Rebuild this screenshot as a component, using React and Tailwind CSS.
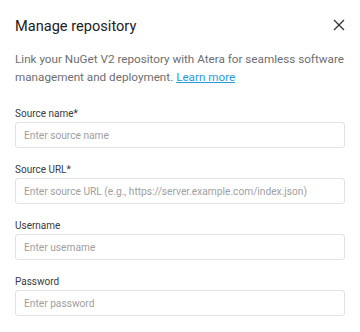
import React from 'react';

const fields = [
  { label: 'Source name*', placeholder: 'Enter source name', type: 'text' },
  { label: 'Source URL*', placeholder: 'Enter source URL (e.g., https://server.example.com/index.json)', type: 'text' },
  { label: 'Username', placeholder: 'Enter username', type: 'text' },
  { label: 'Password', placeholder: 'Enter password', type: 'password' },
];

const App = () => {
  return (
    <div className="w-[360px] h-[332px] bg-white font-[Roboto,sans-serif] px-[15px] pt-4 overflow-hidden">
      {/* Header */}
      <div className="flex items-start justify-between h-5">
        <h2 className="text-[14.6px] leading-5 text-[#212121] font-normal">Manage repository</h2>
        <button className="mt-[3px] text-[#333]">
          <svg width="12" height="12" viewBox="0 0 12 12" fill="none" stroke="currentColor" strokeWidth="1.3">
            <path d="M1 1 L11 11 M11 1 L1 11" />
          </svg>
        </button>
      </div>

      <p className="mt-[14px] text-[11.7px] leading-[18px] text-[#6e6e6e]">
        Link your NuGet V2 repository with Atera for seamless software management and deployment.{' '}
        <a href="#" className="text-[#2b9ad8] underline">Learn more</a>
      </p>

      {/* Form */}
      <div className="mt-5 flex flex-col gap-[14px]">
        {fields.map((f) => (
          <div key={f.label}>
            <label className="block text-[10px] leading-4 font-normal text-[#3a3a3a]">{f.label}</label>
            <input
              type={f.type}
              placeholder={f.placeholder}
              className="block w-full h-[26px] border border-[#e2e2e2] rounded-[3px] px-2 text-[10.2px] text-[#333] placeholder:text-[#a0a0a0] outline-none"
            />
          </div>
        ))}
      </div>
    </div>
  );
};

export default App;
